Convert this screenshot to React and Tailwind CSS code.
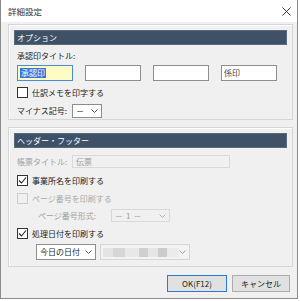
import React from 'react'

const font = { fontFamily: '"Noto Sans CJK JP", "Noto Sans", sans-serif' }

function Check({ checked, disabled }) {
  return (
    <span
      className={`w-[11px] h-[11px] border flex items-center justify-center shrink-0 ${
        disabled ? 'border-[#cccccc] bg-[#f0f0f0]' : 'border-[#333333] bg-white'
      }`}
    >
      {checked && (
        <svg width="9" height="9" viewBox="0 0 9 9">
          <path d="M1 4.5 L3.5 7 L8 1.5" fill="none" stroke="#222" strokeWidth="1.1" />
        </svg>
      )}
    </span>
  )
}

function Chevron({ color = '#444' }) {
  return (
    <svg width="7" height="4" viewBox="0 0 7 4">
      <path d="M0.5 0.5 L3.5 3.5 L6.5 0.5" fill="none" stroke={color} strokeWidth="0.9" />
    </svg>
  )
}

function Header({ children }) {
  return (
    <div className="h-[15px] bg-[#3f5166] border border-[#5a6b7e] text-white text-[8px] leading-none flex items-center pl-[2px]">
      {children}
    </div>
  )
}

export default function App() {
  return (
    <div className="w-[300px] h-[301px] bg-white text-[#1a1a1a]" style={font}>
      <div className="w-[298px] h-[299px] border-l border-r border-b border-[#8a8a8a] bg-[#f0f0f0] flex flex-col">
        {/* title bar */}
        <div className="h-[22px] bg-white flex items-center justify-between pl-[7px] pr-[6px] shrink-0">
          <span className="text-[8.5px] text-[#333]">詳細設定</span>
          <svg width="9" height="9" viewBox="0 0 9 9">
            <path d="M0.5 0.5 L8.5 8.5 M8.5 0.5 L0.5 8.5" stroke="#222" strokeWidth="0.9" />
          </svg>
        </div>

        <div className="pl-[7px] pr-[4px] pt-[2px] flex flex-col">
          {/* options group */}
          <div className="h-[96px] border border-[#d6d6d6] shadow-[inset_1px_1px_0_#ffffff] px-[5px] pt-[5px]">
            <Header>オプション</Header>
            <div className="pl-[3px]">
              <div className="text-[8px] leading-none mt-[7px]">承認印タイトル:</div>
              <div className="flex gap-[12px] mt-[5px]">
                <div className="w-[56px] h-[16px] border border-[#4a8ad8] bg-[#fcfcc4] flex items-center pl-[2px]">
                  <span className="bg-[#3378d8] text-white text-[8px] leading-[10px] px-[1px]">承認印</span>
                </div>
                <div className="w-[56px] h-[16px] border border-[#8d8d8d] bg-white" />
                <div className="w-[56px] h-[16px] border border-[#8d8d8d] bg-white" />
                <div className="w-[56px] h-[16px] border border-[#8d8d8d] bg-white flex items-center pl-[2px] text-[8px] text-[#444]">
                  係印
                </div>
              </div>
              <div className="flex items-center gap-[4px] mt-[6px] text-[8px] leading-none">
                <Check />
                <span>仕訳メモを印字する</span>
              </div>
              <div className="flex items-center mt-[6px] text-[8px] leading-none">
                <span className="w-[55px]">マイナス記号:</span>
                <div className="w-[30px] h-[14px] border border-[#8d8d8d] bg-white flex items-center justify-between px-[3px]">
                  <span>－</span>
                  <Chevron />
                </div>
              </div>
            </div>
          </div>

          {/* header/footer group */}
          <div className="h-[140px] mt-[7px] border border-[#d6d6d6] shadow-[inset_1px_1px_0_#ffffff] px-[5px] pt-[5px]">
            <Header>ヘッダー・フッター</Header>
            <div className="pl-[3px] text-[8px] leading-none">
              <div className="flex items-center mt-[7px]">
                <span className="w-[55px] text-[#a0a0a0]">帳票タイトル:</span>
                <div className="w-[158px] h-[13px] border border-[#d9d9d9] bg-[#f0f0f0] flex items-center pl-[3px] text-[#9a9a9a]">
                  伝票
                </div>
              </div>
              <div className="flex items-center gap-[4px] mt-[7px]">
                <Check checked />
                <span>事業所名を印刷する</span>
              </div>
              <div className="flex items-center gap-[4px] mt-[7px] text-[#a8a8a8]">
                <Check disabled />
                <span>ページ番号を印刷する</span>
              </div>
              <div className="flex items-center mt-[5px] pl-[21px] text-[#a0a0a0]">
                <span className="w-[73px]">ページ番号形式:</span>
                <div className="w-[59px] h-[13px] border border-[#d9d9d9] bg-[#f0f0f0] flex items-center justify-between px-[3px]">
                  <span className="tracking-[3px]">－1－</span>
                  <Chevron color="#aaa" />
                </div>
              </div>
              <div className="flex items-center gap-[4px] mt-[6px]">
                <Check checked />
                <span>処理日付を印刷する</span>
              </div>
              <div className="flex items-center gap-[4px] mt-[5px] pl-[19px]">
                <div className="w-[60px] h-[16px] border border-[#8d8d8d] bg-white flex items-center justify-between px-[3px]">
                  <span>今日の日付</span>
                  <Chevron />
                </div>
                <div className="w-[90px] h-[16px] border border-[#d6d6d6] bg-[#f3f3f3] flex items-center justify-between pl-[2px] pr-[3px]">
                  <div className="flex h-[9px]">
                    <div className="w-[10px] bg-[#e4e4e4]" />
                    <div className="w-[12px] bg-[#d6d6d6]" />
                    <div className="w-[14px] bg-[#e8e8e8]" />
                    <div className="w-[9px] bg-[#d0d0d0]" />
                    <div className="w-[10px] bg-[#e6e6e6]" />
                    <div className="w-[9px] bg-[#cccccc]" />
                    <div className="w-[12px] bg-[#ebebeb]" />
                  </div>
                  <Chevron color="#999" />
                </div>
              </div>
            </div>
          </div>

          {/* buttons */}
          <div className="flex justify-end gap-[5px] mt-[8px] pr-[3px] text-[8px] leading-none">
            <button className="w-[60px] h-[17px] border border-[#2a7ad5] bg-[#e1e1e1] flex items-center justify-center">
              OK(F12)
            </button>
            <button className="w-[58px] h-[17px] border border-[#adadad] bg-[#e1e1e1] flex items-center justify-center">
              キャンセル
            </button>
          </div>
        </div>
      </div>
    </div>
  )
}
